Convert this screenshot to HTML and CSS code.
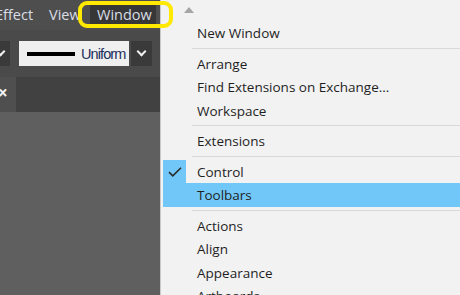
FILE: index.html
```html
<!DOCTYPE html>
<html lang="en">
<head>
    <meta charset="UTF-8">
    <title>Window menu</title>
    <link rel="stylesheet" href="styles.css">
</head>
<body>
    <div class="app">
        <div class="menubar">
            <span class="menubar-item first">Effect</span>
            <span class="menubar-item view">View</span>
            <span class="menubar-item active">Window<span class="callout"></span></span>
        </div>
        <div class="toolbar">
            <div class="tool-btn cut"><span class="chev"></span></div>
            <div class="stroke-box">
                <span class="stroke-line"></span>
                <span class="stroke-label">Uniform</span>
            </div>
            <div class="tool-btn"><span class="chev"></span></div>
        </div>
        <div class="tabs">
            <div class="tab">&times;</div>
        </div>
        <div class="canvas"></div>
    </div>

    <div class="menu">
        <div class="scroll-up"><span class="arrow"></span></div>
        <div class="item"><span class="gutter"></span><span class="label">New Window</span></div>
        <div class="sep"></div>
        <div class="item"><span class="gutter"></span><span class="label">Arrange</span></div>
        <div class="item"><span class="gutter"></span><span class="label">Find Extensions on Exchange...</span></div>
        <div class="item"><span class="gutter"></span><span class="label">Workspace</span></div>
        <div class="sep"></div>
        <div class="item"><span class="gutter"></span><span class="label">Extensions</span></div>
        <div class="sep"></div>
        <div class="item checked">
            <span class="gutter">
                <svg width="14" height="10" viewBox="0 0 14 10"><path d="M1 5.2 L4.8 8.8 L13 0.8" fill="none" stroke="#2b2b2b" stroke-width="1.6"/></svg>
            </span>
            <span class="label">Control</span>
        </div>
        <div class="item hover"><span class="gutter"></span><span class="label">Toolbars</span></div>
        <div class="sep"></div>
        <div class="item"><span class="gutter"></span><span class="label">Actions</span></div>
        <div class="item"><span class="gutter"></span><span class="label">Align</span></div>
        <div class="item"><span class="gutter"></span><span class="label">Appearance</span></div>
        <div class="item"><span class="gutter"></span><span class="label">Artboards</span></div>
    </div>
</body>
</html>
```

FILE: styles.css
```css
body, html {
    margin: 0;
    padding: 0;
    width: 100%;
    height: 100%;
    overflow: hidden;
}

body {
    display: flex;
    font-family: "Open Sans", "Noto Sans", sans-serif;
}

/* lado oscuro de la app */
.app {
    width: 160px;
    flex: none;
    display: flex;
    flex-direction: column;
    background-color: #4b4b4b;
    position: relative;
    z-index: 2;
}

.menubar {
    height: 30px;
    display: flex;
    align-items: center;
    background-color: #4e4e4e;
    color: #d9dee6;
    font-size: 14.5px;
}

.menubar-item {
    flex: none;
    line-height: 20px;
    white-space: nowrap;
}

.menubar-item.first {
    margin-left: -5px;
    width: 54px;
}

.menubar-item.view {
    width: 41px;
}

.menubar-item.active {
    position: relative;
    background-color: #373737;
    padding: 0 4px 0 7px;
}

/* recuadro amarillo de la captura */
.callout {
    position: absolute;
    left: -12px;
    top: -4px;
    width: 87px;
    height: 19px;
    border: 4px solid #ffe900;
    border-radius: 9px;
}

.toolbar {
    height: 47px;
    display: flex;
    align-items: center;
    gap: 2px;
    background-color: #4a4a4a;
}

.tool-btn {
    width: 21px;
    height: 25px;
    background-color: #3a3a3a;
    display: flex;
    justify-content: center;
    align-items: center;
}

.tool-btn.cut {
    width: 10px;
    margin-right: 7px;
    justify-content: flex-start;
}

.chev {
    width: 5px;
    height: 5px;
    border-right: 2px solid #f0f0f0;
    border-bottom: 2px solid #f0f0f0;
    transform: translateY(-2px) rotate(45deg);
}

.tool-btn.cut .chev {
    margin-left: -3px;
}

.stroke-box {
    width: 110px;
    height: 25px;
    background-color: #efefef;
    display: flex;
    align-items: center;
    padding-left: 8px;
    box-sizing: border-box;
}

.stroke-line {
    width: 48px;
    height: 4px;
    background-color: #000;
}

.stroke-label {
    margin-left: 6px;
    font-family: "Liberation Sans", Arial, sans-serif;
    font-size: 14.5px;
    letter-spacing: -0.9px;
    color: #1d2f5c;
}

.tabs {
    height: 35px;
    background-color: #414141;
    display: flex;
}

.tab {
    width: 16px;
    background-color: #4f4f4f;
    color: #f2f2f2;
    font-size: 17px;
    line-height: 32px;
    text-indent: -2px;
    font-weight: bold;
}

.canvas {
    flex: 1;
    background-color: #5f5f5f;
}

/* menú desplegable */
.menu {
    flex: 1;
    background-color: #f2f2f2;
    border-left: 1px solid #c9c9c9;
    padding-left: 2px;
    color: #1f1f1f;
    font-size: 13.5px;
}

.scroll-up {
    height: 21.25px;
    position: relative;
}

.arrow {
    position: absolute;
    left: 21px;
    top: 7px;
    border-left: 5px solid transparent;
    border-right: 5px solid transparent;
    border-bottom: 6px solid #a5a5a5;
}

.item {
    height: 23.5px;
    display: flex;
    align-items: center;
}

.gutter {
    width: 23px;
    height: 100%;
    flex: none;
    display: flex;
    justify-content: center;
    align-items: center;
}

.label {
    margin-left: 11px;
    white-space: nowrap;
}

.item.checked .gutter,
.item.hover {
    background-color: #71c7f7;
}

.sep {
    height: 7px;
    margin-left: 29px;
    display: flex;
    align-items: center;
}

.sep::after {
    content: "";
    flex: 1;
    height: 1px;
    background-color: #d9d9d9;
}
```
